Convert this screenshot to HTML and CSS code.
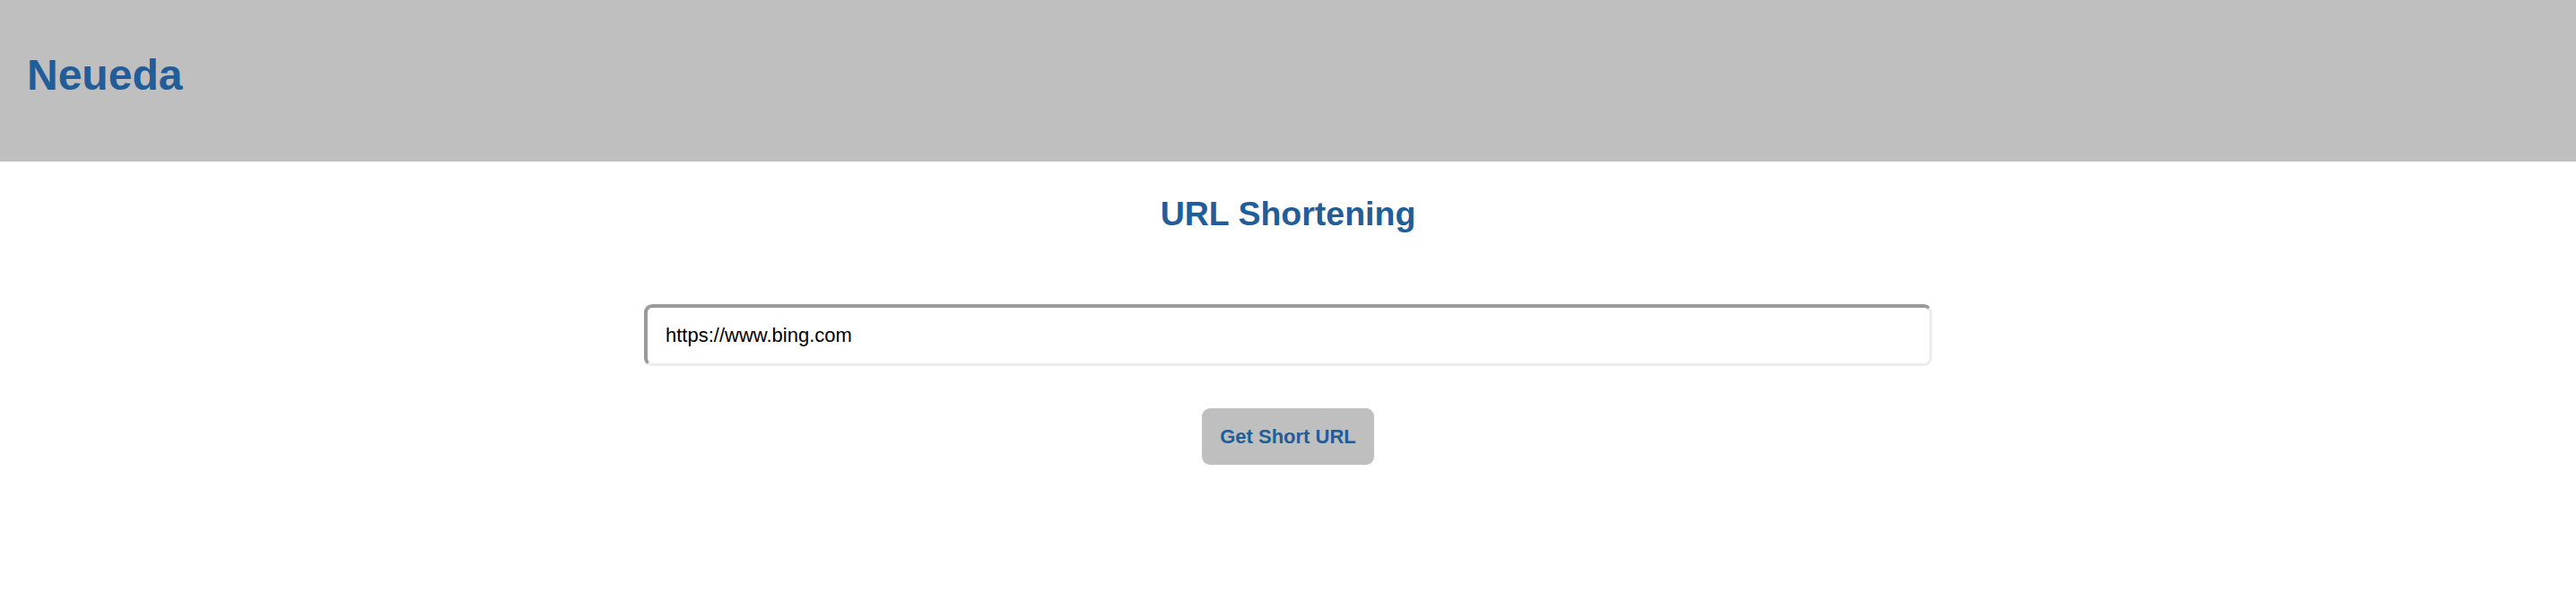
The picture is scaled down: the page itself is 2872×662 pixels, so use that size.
FILE: index.html
```html
<!DOCTYPE html>
<html lang="en">
<head>
<meta charset="utf-8">
<title>Neueda URL Shortening</title>
<link rel="stylesheet" href="styles.css">
</head>
<body>
<header class="site-header">
  <h1 class="brand">Neueda</h1>
</header>
<main class="content">
  <h2 class="page-title">URL Shortening</h2>
  <form class="shorten-form">
    <input class="url-input" type="text" value="https://www.bing.com">
    <button class="submit-btn" type="button">Get Short URL</button>
  </form>
</main>
</body>
</html>
```
FILE: styles.css
```css
html, body {
  margin: 0;
  padding: 0;
  background: #ffffff;
}
body {
  font-family: "Liberation Sans", Arial, Helvetica, sans-serif;
}
.site-header {
  background: #bfbfbf;
  height: 180px;
  box-sizing: border-box;
  padding: 56px 0 0 30px;
}
.brand {
  margin: 0;
  font-size: 48px;
  font-weight: bold;
  color: #205d99;
  line-height: normal;
}
.content {
  display: flex;
  flex-direction: column;
  align-items: center;
}
.page-title {
  margin: 37px 0 0 0;
  font-size: 37.5px;
  font-weight: bold;
  color: #205d99;
  line-height: normal;
}
.shorten-form {
  margin-top: 79px;
  width: 50%;
  display: flex;
  flex-direction: column;
  align-items: center;
}
.url-input {
  width: 100%;
  height: 69px;
  box-sizing: border-box;
  border-width: 4px 3px 3px 4px;
  border-style: solid;
  border-color: #9a9a9a #ececec #ececec #9a9a9a;
  border-radius: 9px;
  padding: 0 20px;
  font-family: "Liberation Sans", Arial, Helvetica, sans-serif;
  font-size: 22px;
  color: #000000;
  background: #ffffff;
  outline: none;
}
.submit-btn {
  margin-top: 47px;
  height: 63px;
  padding: 0 20px;
  border: none;
  border-radius: 9px;
  background: #bfbfbf;
  color: #205d99;
  font-family: "Liberation Sans", Arial, Helvetica, sans-serif;
  font-size: 22px;
  font-weight: bold;
  cursor: pointer;
}
```
